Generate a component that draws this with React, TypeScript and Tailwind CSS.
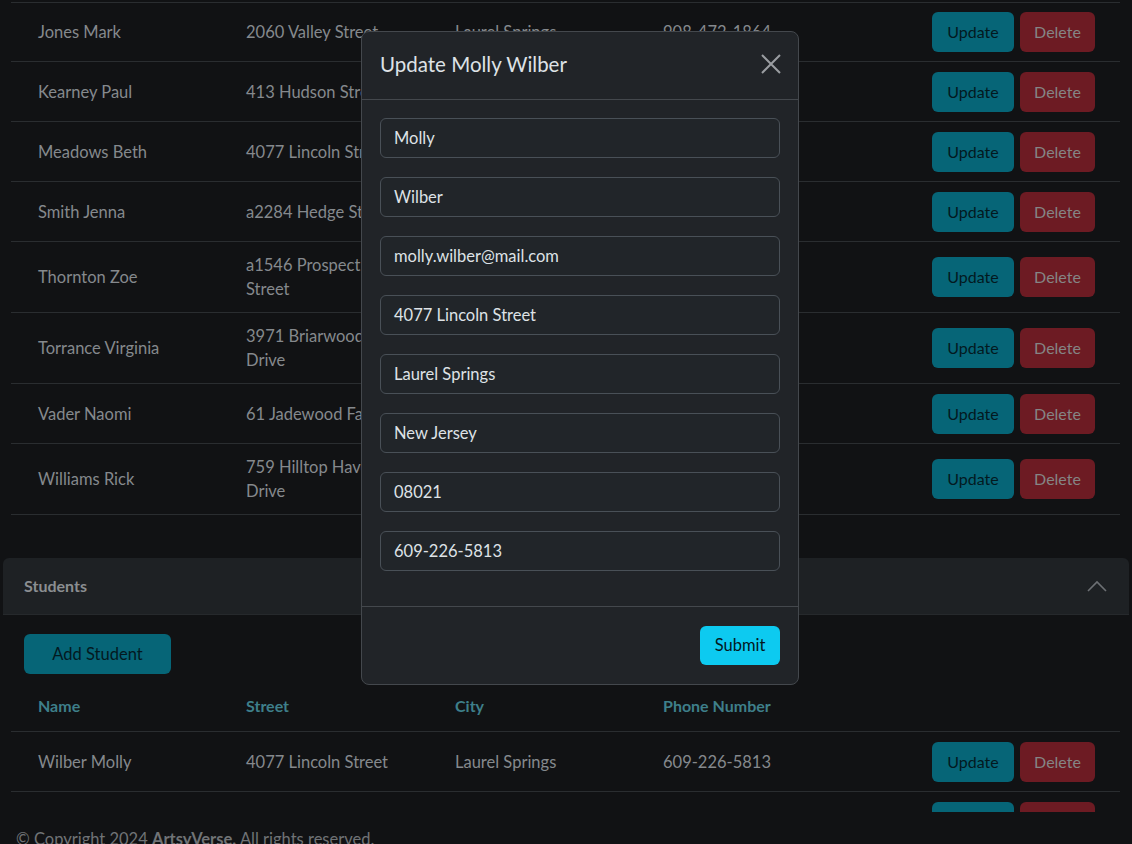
import React from "react";

type Row = { name: string; street: string[]; city: string; phone: string };

const teachers: Row[] = [
  { name: "Jones Mark", street: ["2060 Valley Street"], city: "Laurel Springs", phone: "908-472-1864" },
  { name: "Kearney Paul", street: ["413 Hudson Street"], city: "Laurel Springs", phone: "908-472-1864" },
  { name: "Meadows Beth", street: ["4077 Lincoln Street"], city: "Laurel Springs", phone: "609-226-5813" },
  { name: "Smith Jenna", street: ["a2284 Hedge Street"], city: "Laurel Springs", phone: "908-472-1864" },
  { name: "Thornton Zoe", street: ["a1546 Prospect", "Street"], city: "Laurel Springs", phone: "908-472-1864" },
  { name: "Torrance Virginia", street: ["3971 Briarwood", "Drive"], city: "Laurel Springs", phone: "908-472-1864" },
  { name: "Vader Naomi", street: ["61 Jadewood Farms"], city: "Laurel Springs", phone: "908-472-1864" },
  { name: "Williams Rick", street: ["759 Hilltop Haven", "Drive"], city: "Laurel Springs", phone: "908-472-1864" },
];

const fields = [
  "Molly",
  "Wilber",
  "molly.wilber@mail.com",
  "4077 Lincoln Street",
  "Laurel Springs",
  "New Jersey",
  "08021",
  "609-226-5813",
];

const font = { fontFamily: "Lato, 'Noto Sans', sans-serif" };

function Buttons() {
  return (
    <div className="flex items-center gap-[6px]">
      <button className="h-10 w-[82px] rounded-md bg-[#066577] text-[16px] text-[#03191f]">Update</button>
      <button className="h-10 w-[75px] rounded-md bg-[#6d1b23] text-[16px] text-[#858585]">Delete</button>
    </div>
  );
}

function TableRow({ r, top }: { r: Row; top?: boolean }) {
  const two = r.street.length > 1;
  return (
    <div
      className={`grid grid-cols-[208px_209px_208px_269px_1fr] items-center border-b border-[#2a2d30] pl-[27px] text-[16.5px] leading-6 text-[#85898d] ${
        two ? "h-[71px]" : "h-[60px]"
      } ${top ? "border-t" : ""}`}
    >
      <div>{r.name}</div>
      <div>
        {r.street.map((s, i) => (
          <div key={i}>{s}</div>
        ))}
      </div>
      <div>{r.city}</div>
      <div>{r.phone}</div>
      <Buttons />
    </div>
  );
}

export default function App() {
  return (
    <div className="relative h-[844px] w-[1132px] overflow-hidden bg-[#111214]" style={font}>
      {/* Teachers table (scrolled) */}
      <div className="pt-[2px]">
        <div className="mx-[11px] w-[1109px]">
          {teachers.map((r, i) => (
            <TableRow key={i} r={r} top={i === 0} />
          ))}
        </div>
      </div>

      {/* Students accordion */}
      <div className="mx-[3px] mt-[43px]">
        <div className="flex h-[57px] items-center justify-between rounded-t-md border-b border-[#26292c] bg-[#1e2124] pl-[21px] pr-[22px]">
          <span className="text-[16px] font-bold text-[#8b8e91]">Students</span>
          <svg width="20" height="12" viewBox="0 0 20 12" fill="none">
            <path d="M1 11 L10 2 L19 11" stroke="#6d7074" strokeWidth="1.6" />
          </svg>
        </div>
        <div className="pt-[19px]">
          <button className="ml-[21px] h-10 w-[147px] rounded-md bg-[#066577] text-[16.5px] text-[#03191f]">
            Add Student
          </button>
          <div className="ml-[8px] mt-[10px] h-[128px] w-[1109px] overflow-hidden">
            <div className="grid h-[48px] grid-cols-[208px_209px_208px_269px_1fr] items-start border-b border-[#2a2d30] pl-[27px] pt-[10px] text-[16px] leading-6 font-bold text-[#3e7f8a]">
              <div>Name</div>
              <div>Street</div>
              <div>City</div>
              <div>Phone Number</div>
              <div />
            </div>
            <TableRow r={{ name: "Wilber Molly", street: ["4077 Lincoln Street"], city: "Laurel Springs", phone: "609-226-5813" }} />
            <div className="grid h-[60px] grid-cols-[208px_209px_208px_269px_1fr] items-center pl-[27px]">
              <div />
              <div />
              <div />
              <div />
              <Buttons />
            </div>
          </div>
        </div>
      </div>

      {/* Footer */}
      <div className="ml-[16px] mt-[15px] text-[16.5px] text-[#707376]">
        © Copyright 2024 <span className="font-bold">ArtsyVerse.</span> All rights reserved.
      </div>

      {/* Modal */}
      <div className="absolute left-[361px] top-[31px] w-[438px] rounded-lg border border-[#44484d] bg-[#212428]">
        <div className="flex h-[68px] items-center justify-between border-b border-[#44484d] pb-[3px] pl-[18px] pr-[16px]">
          <span className="text-[20.5px] text-[#dee2e6]">Update Molly Wilber</span>
          <svg width="22" height="22" viewBox="0 0 22 22" fill="none">
            <path d="M2 2 L20 20 M20 2 L2 20" stroke="#9a9da1" strokeWidth="2" />
          </svg>
        </div>
        <div className="flex flex-col gap-[19px] px-[18px] pb-[35px] pt-[18px]">
          {fields.map((f, i) => (
            <div
              key={i}
              className="flex h-10 items-center rounded-md border border-[#495057] bg-[#212529] px-[13px] text-[16.5px] text-[#dee2e6]"
            >
              {f}
            </div>
          ))}
        </div>
        <div className="flex h-[78px] items-center justify-end border-t border-[#44484d] pr-[18px]">
          <button className="h-[39px] w-[80px] rounded-md bg-[#0dcaf0] text-[16.5px] text-[#04181d]">Submit</button>
        </div>
      </div>
    </div>
  );
}
